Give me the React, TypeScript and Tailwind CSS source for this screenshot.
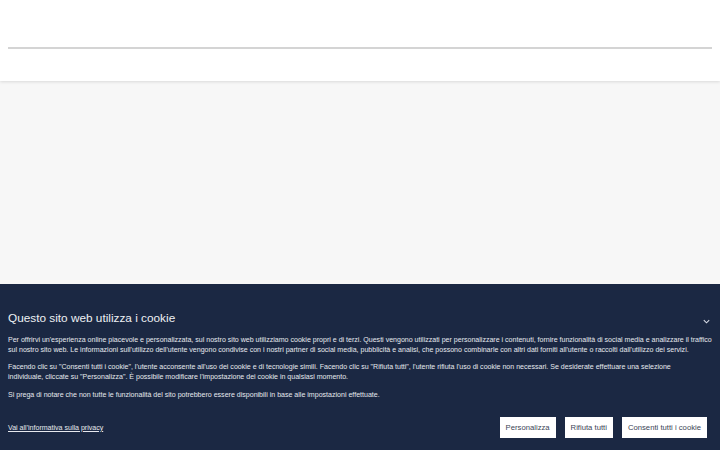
import React from 'react';

const FONT = { fontFamily: '"Liberation Sans", Arial, Helvetica, sans-serif' };

const App: React.FC = () => (
  <div className="w-[720px] h-[450px] overflow-hidden bg-[#f7f7f7] flex flex-col" style={FONT}>
    <header className="h-[81px] bg-white shrink-0 relative z-10 shadow-[0_1px_3px_rgba(0,0,0,0.12)] px-2 pt-[47px]">
      <div className="h-[2px] bg-[#d4d4d4]" />
    </header>

    <main className="flex-1" />

    <section className="h-[166px] shrink-0 bg-[#1b2843] text-white px-2 pt-[26px]">
      <div className="flex items-center justify-between">
        <h2 className="text-[11.8px] leading-[16px] font-normal text-[#eef0f4]">Questo sito web utilizza i cookie</h2>
        <svg className="w-[9px] h-[9px] mr-[1px] mt-[6px]" viewBox="0 0 10 10" fill="none" stroke="#d8dce6" strokeWidth="1.2">
          <path d="M2 3.5 L5 6.5 L8 3.5" />
        </svg>
      </div>

      <div className="mt-[9px] text-[7.05px] leading-[10px] text-[#e6e8ee]">
        <p className="mb-[7px]">
          Per offrirvi un'esperienza online piacevole e personalizzata, sul nostro sito web utilizziamo cookie propri e di terzi. Questi vengono utilizzati per personalizzare i contenuti, fornire funzionalità di social media e analizzare il traffico sul nostro sito web. Le informazioni sull'utilizzo dell'utente vengono condivise con i nostri partner di social media, pubblicità e analisi, che possono combinarle con altri dati forniti all'utente o raccolti dall'utilizzo dei servizi.
        </p>
        <p className="mb-[8px] max-w-[675px]">
          Facendo clic su "Consenti tutti i cookie", l'utente acconsente all'uso dei cookie e di tecnologie simili. Facendo clic su "Rifiuta tutti", l'utente rifiuta l'uso di cookie non necessari. Se desiderate effettuare una selezione individuale, cliccate su "Personalizza". È possibile modificare l'impostazione dei cookie in qualsiasi momento.
        </p>
        <p>
          Si prega di notare che non tutte le funzionalità del sito potrebbero essere disponibili in base alle impostazioni effettuate.
        </p>
      </div>

      <div className="mt-[17px] flex items-center justify-between pr-[5px]">
        <a href="#" className="text-[7.05px] leading-[10px] underline text-[#e6e8ee]">Vai all'informativa sulla privacy</a>
        <div className="flex gap-[9px]">
          {['Personalizza', 'Rifiuta tutti', 'Consenti tutti i cookie'].map(label => (
            <button key={label} className="h-[21px] px-[6px] bg-white text-[#3b4456] text-[7.7px] leading-[10px]">
              {label}
            </button>
          ))}
        </div>
      </div>
    </section>
  </div>
);

export default App;
